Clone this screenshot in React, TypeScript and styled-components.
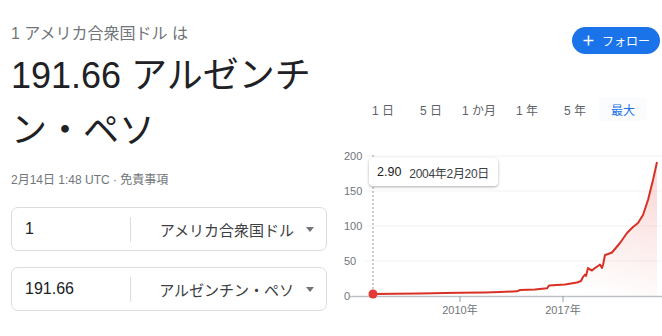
import React from "react";
import styled, { createGlobalStyle } from "styled-components";

const GlobalStyle = createGlobalStyle`
  html, body {
    margin: 0;
    padding: 0;
    background: #fff;
  }
  body {
    font-family: "Liberation Sans", Arial, "Noto Sans CJK JP", sans-serif;
    color: #202124;
  }
`;

const Page = styled.div`
  display: flex;
  width: 662px;
  height: 336px;
  box-sizing: border-box;
  padding: 24px 0 0 11px;
  overflow: hidden;
`;

/* left column */

const Converter = styled.div`
  flex: none;
  width: 316px;
  display: flex;
  flex-direction: column;
`;

const Question = styled.div`
  font-size: 16px;
  line-height: 20px;
  color: #70757a;
`;

const Answer = styled.div`
  margin-top: 4px;
  font-size: 36px;
  line-height: 55px;
  color: #202124;
`;

const Stamp = styled.div`
  margin-top: 14px;
  font-size: 12px;
  line-height: 16px;
  color: #70757a;
`;

const Fields = styled.div`
  margin-top: 19px;
  display: flex;
  flex-direction: column;
  gap: 16px;
`;

const Field = styled.div`
  display: flex;
  align-items: center;
  height: 44px;
  box-sizing: border-box;
  border: 1px solid #dadce0;
  border-radius: 7px;
`;

const Amount = styled.div`
  flex: none;
  width: 118px;
  box-sizing: border-box;
  padding-left: 13px;
  font-size: 16px;
  color: #202124;
`;

const Divider = styled.div`
  flex: none;
  width: 1px;
  height: 25px;
  background: #dadce0;
`;

const Currency = styled.div`
  flex: 1;
  display: flex;
  align-items: center;
  justify-content: flex-end;
  gap: 12px;
  padding-right: 12px;
  font-size: 15px;
  color: #3c4043;
`;

const Caret = styled.span`
  width: 0;
  height: 0;
  border-left: 4.5px solid transparent;
  border-right: 4.5px solid transparent;
  border-top: 5px solid #70757a;
`;

/* right column */

const Graph = styled.div`
  flex: 1;
  margin-left: 8px;
  padding-top: 3px;
  display: flex;
  flex-direction: column;
`;

const FollowRow = styled.div`
  display: flex;
  justify-content: flex-end;
  padding-right: 2px;
`;

const FollowButton = styled.button`
  display: flex;
  align-items: center;
  gap: 8px;
  height: 27px;
  width: 88px;
  box-sizing: border-box;
  padding: 0 0 0 11px;
  border: none;
  border-radius: 14px;
  background: #1a73e8;
  color: #fff;
  font-family: inherit;
  font-size: 12px;
`;

const Ranges = styled.div`
  display: flex;
  margin-top: 43px;
  padding-left: 24px;
`;

const Range = styled.div<{ $active?: boolean }>`
  width: 48px;
  height: 24px;
  display: flex;
  align-items: center;
  justify-content: center;
  font-size: 12px;
  color: ${(p) => (p.$active ? "#1a73e8" : "#5f6368")};
  background: ${(p) => (p.$active ? "rgba(26, 115, 232, 0.025)" : "transparent")};
  border-radius: 4px;
`;

const ChartBox = styled.div`
  position: relative;
  height: 200px;

  svg {
    display: block;
  }
`;

const AxisText = styled.text`
  font-family: "Liberation Sans", Arial, "Noto Sans CJK JP", sans-serif;
  font-size: 11px;
  fill: #70757a;
`;

const Tip = styled.div`
  position: absolute;
  left: 34px;
  top: 37px;
  width: 129px;
  height: 28px;
  box-sizing: border-box;
  padding-left: 8px;
  display: flex;
  align-items: center;
  gap: 8px;
  background: #fff;
  border-radius: 4px;
  box-shadow: 0 1px 3px rgba(60, 64, 67, 0.3), 0 1px 2px rgba(60, 64, 67, 0.15);
  white-space: nowrap;
`;

const TipValue = styled.span`
  font-size: 12.5px;
  color: #202124;
`;

const TipDate = styled.span`
  font-size: 12px;
  letter-spacing: -0.3px;
  color: #3c4043;
`;

const ranges = ["1 日", "5 日", "1 か月", "1 年", "5 年", "最大"];

const yTicks = [
  { label: "200", y: 35 },
  { label: "150", y: 70 },
  { label: "100", y: 105 },
  { label: "50", y: 140 },
  { label: "0", y: 175 },
];

const points: [number, number][] = [
  [38, 173], [60, 172.8], [85, 172.5], [110, 172], [125, 171.8], [150, 171.4],
  [165, 171], [182, 170.3], [185, 169], [200, 168.4], [212, 167.3], [214, 164.5],
  [222, 164], [230, 163.5], [242, 161.5], [246, 160], [248, 156], [250, 153.5],
  [251, 155], [253, 147], [255, 148.5], [257, 149.5], [260, 147], [263, 145],
  [265, 143.5], [267, 147], [268, 144], [270, 134], [273, 133], [277, 131.5],
  [285, 122], [292, 112], [298, 106], [303, 102], [308, 94], [313, 79],
  [318, 59], [322, 41],
];

const linePath = points.map(([x, y], i) => `${i ? "L" : "M"}${x} ${y}`).join(" ");
const areaPath = `${linePath} L322 175 L38 175 Z`;

function Chart() {
  return (
    <ChartBox>
      <svg width="327" height="200" viewBox="0 0 327 200">
        <defs>
          <linearGradient id="fade" x1="0.62" y1="0.9" x2="1" y2="0.25">
            <stop offset="0" stopColor="#d93025" stopOpacity="0" />
            <stop offset="1" stopColor="#d93025" stopOpacity="0.16" />
          </linearGradient>
        </defs>
        {yTicks.slice(0, 4).map((t) => (
          <line key={t.label} x1="30" x2="327" y1={t.y} y2={t.y} stroke="#f3f3f3" strokeWidth="1" />
        ))}
        {yTicks.map((t) => (
          <AxisText key={t.label} x="9" y={t.y + 4}>
            {t.label}
          </AxisText>
        ))}
        <line x1="38" x2="38" y1="34" y2="172" stroke="#9aa0a6" strokeWidth="1" strokeDasharray="2 2" />
        <path d={areaPath} fill="url(#fade)" />
        <line x1="15" x2="327" y1="175.5" y2="175.5" stroke="#bdc1c6" strokeWidth="1.5" />
        <line x1="125" x2="125" y1="175" y2="181" stroke="#9aa0a6" strokeWidth="1" />
        <line x1="228" x2="228" y1="175" y2="181" stroke="#9aa0a6" strokeWidth="1" />
        <AxisText x="125" y="193" textAnchor="middle">2010年</AxisText>
        <AxisText x="228" y="193" textAnchor="middle">2017年</AxisText>
        <path d={linePath} fill="none" stroke="#d93025" strokeWidth="2" strokeLinejoin="round" />
        <circle cx="38" cy="173" r="4.5" fill="#e53935" />
      </svg>
      <Tip>
        <TipValue>2.90</TipValue>
        <TipDate>2004年2月20日</TipDate>
      </Tip>
    </ChartBox>
  );
}

export default function App() {
  return (
    <>
      <GlobalStyle />
      <Page>
        <Converter>
          <Question>1 アメリカ合衆国ドル は</Question>
          <Answer>191.66 アルゼンチン・ペソ</Answer>
          <Stamp>2月14日 1:48 UTC · 免責事項</Stamp>
          <Fields>
            <Field>
              <Amount>1</Amount>
              <Divider />
              <Currency>
                アメリカ合衆国ドル
                <Caret />
              </Currency>
            </Field>
            <Field>
              <Amount>191.66</Amount>
              <Divider />
              <Currency>
                アルゼンチン・ペソ
                <Caret />
              </Currency>
            </Field>
          </Fields>
        </Converter>
        <Graph>
          <FollowRow>
            <FollowButton>
              <svg width="11" height="11" viewBox="0 0 11 11">
                <path d="M5.5 0.5v10M0.5 5.5h10" stroke="#fff" strokeWidth="1.6" />
              </svg>
              フォロー
            </FollowButton>
          </FollowRow>
          <Ranges>
            {ranges.map((r) => (
              <Range key={r} $active={r === "最大"}>
                {r}
              </Range>
            ))}
          </Ranges>
          <Chart />
        </Graph>
      </Page>
    </>
  );
}
